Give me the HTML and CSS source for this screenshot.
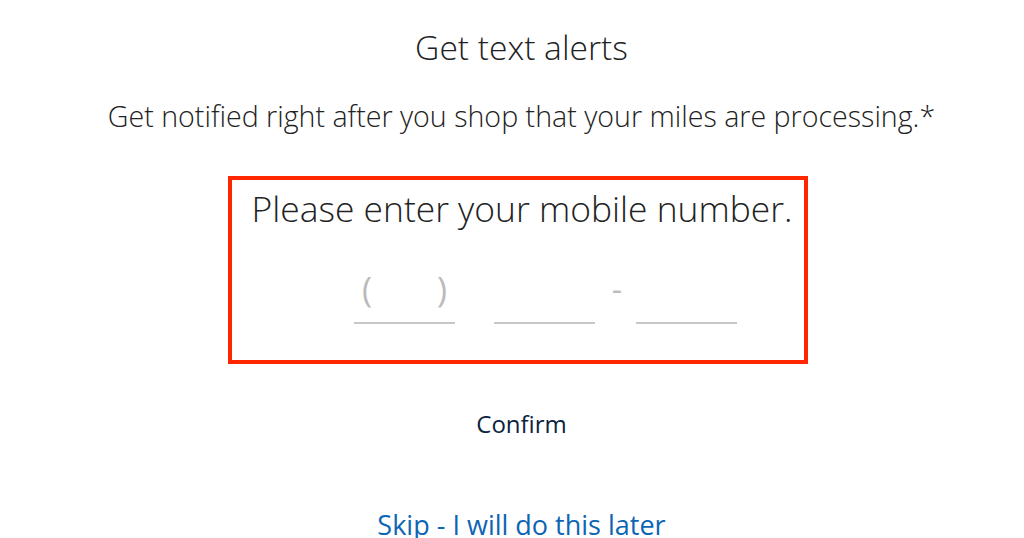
FILE: index.html
```html
<!DOCTYPE html>
<html>
<head>
<meta charset="utf-8">
<link rel="stylesheet" href="styles.css">
</head>
<body>
<main class="page">
  <h1 class="title">Get text alerts</h1>
  <p class="subtitle">Get notified right after you shop that your miles are processing.*</p>
  <section class="box">
    <h2 class="prompt">Please enter your mobile number.</h2>
    <div class="phone">
      <div class="field area"><span class="paren">(</span><span class="paren">)</span></div>
      <div class="field"></div>
      <span class="dash">-</span>
      <div class="field"></div>
    </div>
  </section>
  <button class="confirm">Confirm</button>
  <a class="skip" href="#">Skip - I will do this later</a>
</main>
</body>
</html>
```

FILE: styles.css
```css
html, body {
  margin: 0;
  padding: 0;
  background: #ffffff;
}
body {
  font-family: "Open Sans", "Liberation Sans", sans-serif;
  color: #333333;
}
.page {
  box-sizing: border-box;
  display: flex;
  flex-direction: column;
  align-items: center;
  width: 1024px;
  height: 538px;
  padding-left: 16px;
  overflow: hidden;
  text-align: center;
}
.page > * {
  flex-shrink: 0;
}
.title {
  margin: 24px 0 0;
  padding-left: 3px;
  font-size: 33.6px;
  font-weight: 300;
  line-height: 46px;
  color: #222222;
  white-space: nowrap;
}
.subtitle {
  margin: 26px 0 0;
  padding-left: 3px;
  font-size: 28.6px;
  font-weight: 300;
  line-height: 40px;
  color: #222222;
  white-space: nowrap;
}
.box {
  box-sizing: border-box;
  width: 580px;
  height: 188px;
  margin-top: 40px;
  margin-right: 4px;
  border: 4px solid #ff2600;
  display: flex;
  flex-direction: column;
  align-items: center;
}
.prompt {
  margin: 4px 0 0 8px;
  font-size: 35.4px;
  font-weight: 300;
  line-height: 48px;
  color: #222222;
  white-space: nowrap;
}
.phone {
  align-self: flex-start;
  display: flex;
  align-items: flex-end;
  margin-top: 34px;
  margin-left: 122px;
}
.field {
  box-sizing: border-box;
  width: 101px;
  height: 58px;
  border-bottom: 2px solid #c8c8c8;
}
.area {
  display: flex;
  justify-content: space-between;
  align-items: flex-start;
  padding: 0 8px;
}
.paren {
  font-size: 34px;
  line-height: 46px;
  color: #bbbbbb;
}
.field + .field {
  margin-left: 39px;
}
.dash {
  align-self: flex-start;
  width: 41px;
  padding-left: 3px;
  box-sizing: border-box;
  font-size: 32px;
  line-height: 46px;
  color: #bbbbbb;
}
.confirm {
  margin-top: 44px;
  padding: 0 0 0 3px;
  border: 0;
  background: none;
  font-family: "Open Sans", "Liberation Sans", sans-serif;
  font-size: 24px;
  line-height: 32px;
  color: #0c2340;
}
.skip {
  margin-top: 67px;
  padding-left: 3px;
  font-size: 27px;
  line-height: 36px;
  color: #0d65b3;
  text-decoration: none;
  white-space: nowrap;
}
```
